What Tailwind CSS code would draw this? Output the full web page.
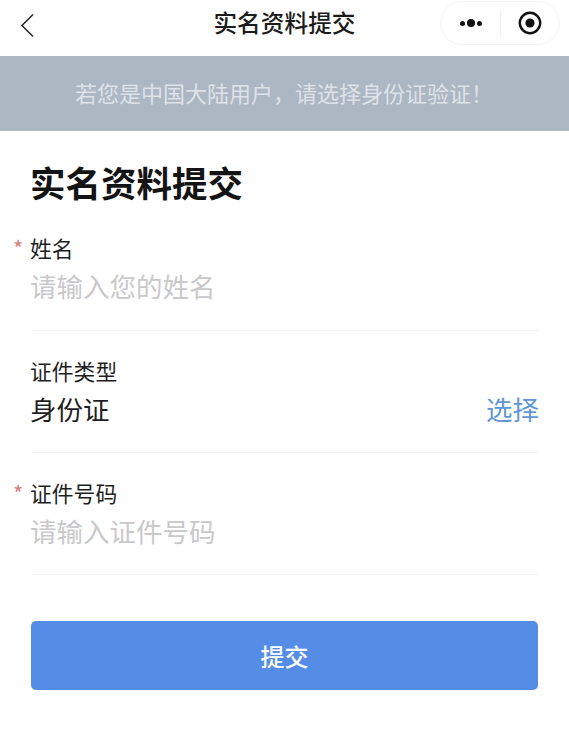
<!DOCTYPE html>
<html lang="zh-CN">
<head>
<meta charset="utf-8">
<script src="https://cdn.jsdelivr.net/npm/@tailwindcss/browser@4"></script>
</head>
<body class="bg-white font-['Noto_Sans_CJK_SC',sans-serif]">
<div class="w-[569px] h-[735px] overflow-hidden flex flex-col">
  <header class="relative h-[56px] flex items-center justify-center shrink-0 pb-[10px]">
    <svg class="absolute left-[20px] top-[13px] w-[16px] h-[25px]" viewBox="0 0 16 25" fill="none"><path d="M13 1.5 L2 12.5 L13 23.5" stroke="#2a2a2a" stroke-width="1.6"/></svg>
    <h1 class="text-[23.7px] leading-none font-medium text-[#1c1c1c]">实名资料提交</h1>
    <div class="absolute left-[440px] top-[1px] w-[120px] h-[44px] rounded-full border border-[#f4f4f4] flex items-center">
      <div class="w-[59px] h-full flex items-center justify-center gap-[2px]">
        <span class="w-[5px] h-[5px] rounded-full bg-[#111]"></span><span class="w-[8px] h-[8px] rounded-full bg-[#111]"></span><span class="w-[5px] h-[5px] rounded-full bg-[#111]"></span>
      </div>
      <div class="w-px h-[25px] bg-[#efefef]"></div>
      <div class="flex-1 flex items-center justify-center">
        <svg class="w-[24px] h-[24px]" viewBox="0 0 24 24" fill="none"><circle cx="12" cy="12" r="10.2" stroke="#111" stroke-width="2.4"/><circle cx="12" cy="12" r="4.6" fill="#111"/></svg>
      </div>
    </div>
  </header>
  <div class="h-[75px] bg-[#adb6c3] flex items-center justify-center shrink-0 text-[22px] leading-none text-[#dde2e8] pr-[1px] pb-[4px]">若您是中国大陆用户，请选择身份证验证！</div>
  <main class="px-[31px] flex flex-col flex-1 text-[#1f1f1f]">
    <h2 class="mt-[28px] h-[45px] text-[35.5px] leading-[45px] font-bold text-[#141414] -ml-px">实名资料提交</h2>
    <div class="mt-[30px] h-[97px] border-b border-[#f2f2f2] relative">
      <span class="absolute left-[-18px] top-[-1px] text-[22px] leading-[28px] text-[#d9817e]">*</span>
      <div class="text-[21.8px] leading-[28px] -ml-px">姓名</div>
      <div class="mt-[6px] text-[26.5px] leading-[36px] text-[#c9c9cb] -ml-px">请输入您的姓名</div>
    </div>
    <div class="mt-[26px] h-[96px] border-b border-[#f2f2f2]">
      <div class="text-[21.8px] leading-[28px] -ml-px">证件类型</div>
      <div class="mt-[6px] flex justify-between text-[26.5px] leading-[36px] -ml-px"><span>身份证</span><span class="text-[#5f97d6] -mr-px">选择</span></div>
    </div>
    <div class="mt-[26px] h-[96px] border-b border-[#f2f2f2] relative">
      <span class="absolute left-[-18px] top-[-1px] text-[22px] leading-[28px] text-[#d9817e]">*</span>
      <div class="text-[21.8px] leading-[28px] -ml-px">证件号码</div>
      <div class="mt-[6px] text-[26.5px] leading-[36px] text-[#c9c9cb] -ml-px">请输入证件号码</div>
    </div>
    <button class="mt-[46px] h-[69px] w-[507px] rounded-[5px] bg-[#548ce6] text-white text-[24px] font-medium flex items-center justify-center">提交</button>
  </main>
</div>
</body>
</html>
